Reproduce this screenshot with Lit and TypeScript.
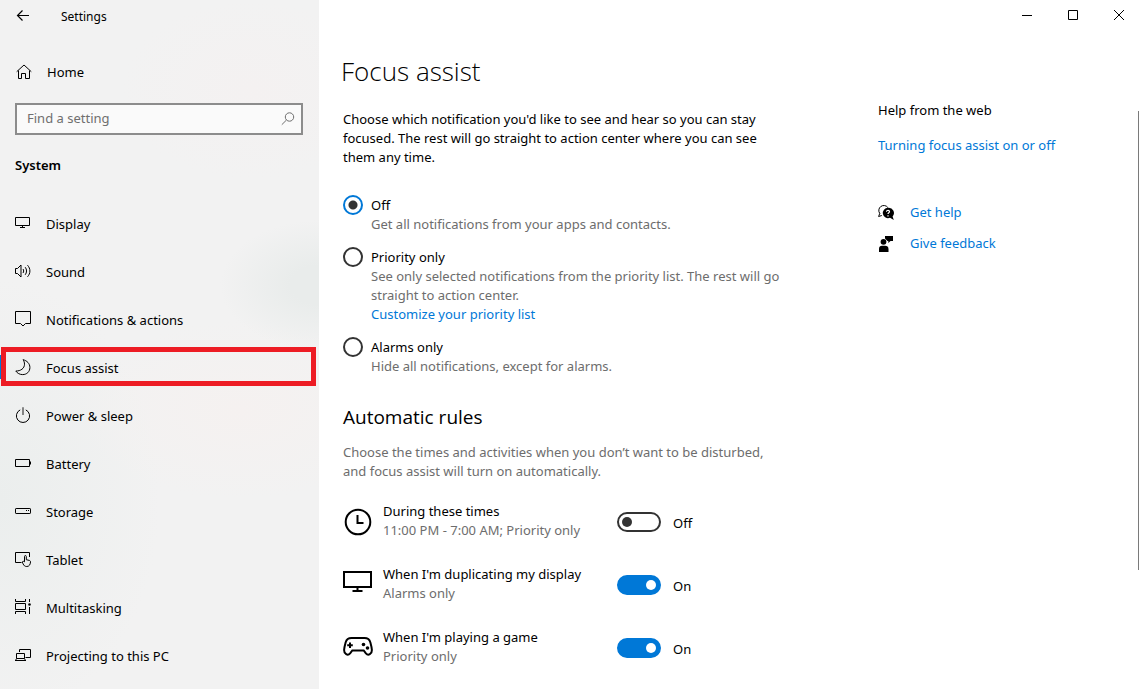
import { LitElement, html, svg, css } from "lit";
import { customElement, state } from "lit/decorators.js";

const icons: Record<string, unknown> = {
  display: svg`<path d="M.5 2.500h14v8H.5zM7.500 11v1.500M5 12.500h5"/>`,
  sound: svg`<path d="M.5 5.500h2L6 2v12l-3.500-3.500H.5z"/><path d="M8 6c.9 1.200.9 2.800 0 4M10.200 4.200c1.800 2.200 1.800 5.400 0 7.600M12.500 2.200c3.200 3.400 3.200 8.200 0 11.600"/>`,
  notifications: svg`<path d="M.5.5h15v12h-5L8 15l-2.500-2.500h-5z"/>`,
  focus: svg`<path d="M8 .7C12 1.600 14.900 4.600 14.900 8.500c0 4.200-3.200 7.100-7.200 7.100-2.900 0-5.400-1.300-6.900-3.600C5.600 12.100 9.500 9.500 9.500 5.200 9.500 3.500 9 2 8 .7z"/>`,
  power: svg`<path d="M5.200 2.900a6.600 6.600 0 1 0 5.600 0"/><path d="M8 .300v7.700" stroke-width="1.400" stroke="#555"/>`,
  battery: svg`<path d="M.5 4.500h14v7H.5zM15.500 6.500v3"/>`,
  storage: svg`<rect x=".5" y="5.500" width="15" height="5" rx=".6"/><path d="M11 7.500h1M13 7.500h1"/>`,
  tablet: svg`<path d="M6.500 11.500h-6v-10h14v4.500"/><path d="M9.500 10.800V5.500c0-1.300 1.800-1.300 1.800 0v3.200l3 .7c.9.200 1.300.8 1.200 1.600-.2 2.600-1.300 4.500-3.700 4.500-2 0-2.900-.9-3.700-2.600l-.9-1.900c.5-.9 1.500-.8 2.300-.2z"/>`,
  multitasking: svg`<path d="M.5 0v2.500h10V0M.5 4.500h10v6H.5zM.5 15v-2.500h10V15M14.500 0v3M14.500 8v7"/><circle cx="14.500" cy="5.500" r="1.300" fill="currentColor" stroke="none"/>`,
  projecting: svg`<path d="M4.500 5V2.500h11v8h-5"/><path d="M1.500 6.500h8v5h-8zM0 13.500h11M1.500 11.500l-1 2M9.500 11.500l1 2"/>`,
};

const navItems = [
  ["display", "Display"],
  ["sound", "Sound"],
  ["notifications", "Notifications & actions"],
  ["focus", "Focus assist"],
  ["power", "Power & sleep"],
  ["battery", "Battery"],
  ["storage", "Storage"],
  ["tablet", "Tablet"],
  ["multitasking", "Multitasking"],
  ["projecting", "Projecting to this PC"],
];

const ruleIcons: Record<string, unknown> = {
  clock: svg`<circle cx="15" cy="16" r="12.300"/><path d="M14.500 9v8h6"/>`,
  monitor: svg`<path d="M1 3h27v15H1zM14.500 18v4M9.500 22h10"/>`,
  gamepad: svg`<path d="M8.500 6h13c3.500 0 5 1.300 5.800 4.200.7 2.600 1.500 5.300 1.600 7.800.1 3.900-3.600 6.200-6 3.400L20.700 18.500H9.300L7.100 21.400C4.700 24.200 1 21.900 1.100 18c.1-2.500.9-5.200 1.600-7.800C3.500 7.300 5 6 8.500 6z"/><path d="M7 10.500v5.500M4.200 13.200h5.600"/><g fill="currentColor" stroke="none"><circle cx="20.500" cy="12.500" r="1.800"/><circle cx="24.500" cy="16" r="1.800"/></g>`,
};

@customElement("app-root")
export class AppRoot extends LitElement {
  @state() private mode = "off";
  @state() private rules = [
    { id: "times", icon: "clock", title: "During these times", detail: "11:00 PM - 7:00 AM; Priority only", on: false },
    { id: "duplicating", icon: "monitor", title: "When I'm duplicating my display", detail: "Alarms only", on: true },
    { id: "game", icon: "gamepad", title: "When I'm playing a game", detail: "Priority only", on: true },
  ];

  static styles = css`
    :host {
      display: flex;
      min-height: 100vh;
      background: #fff;
      color: #000;
      font: 13px/19px "Noto Sans", "Open Sans", sans-serif;
    }
    * { box-sizing: border-box; }
    h1, h2, p { margin: 0; font-weight: 400; }
    a { color: #0078d7; text-decoration: none; }
    button { padding: 0; border: 0; background: none; color: inherit; font: inherit; }
    svg { display: block; flex: none; fill: none; stroke: currentColor; stroke-width: 1; overflow: visible; }

    .sidebar {
      flex: 0 0 319px;
      background:
        radial-gradient(ellipse 100px 65px at 320px 285px, #e9eceb 30%, #e9eceb00),
        radial-gradient(ellipse 160px 90px at 240px 410px, #f5f1f0, #f5f1f000),
        radial-gradient(ellipse 130px 90px at 250px 90px, #f4f1f1, #f4f1f100),
        radial-gradient(ellipse 160px 220px at 0 500px, #ebeeed, #ebeeed00),
        #f2f2f2;
    }
    .caption { display: flex; align-items: center; height: 32px; padding-left: 15px; font-size: 12px; }
    .back { display: grid; place-items: center; width: 16px; height: 30px; margin-right: 30px; }
    .home { display: flex; align-items: center; gap: 15px; margin: 16px 0 7px; padding-left: 16px; height: 48px; color: inherit; }
    .search { position: relative; margin: 0 16px 0 15px; color: #6f6f6f; }
    .search input {
      display: block; width: 100%; height: 32px; padding: 0 34px 2px 10px;
      border: 2px solid #8c8c8c; border-radius: 0; background: #fafafa; font: inherit; color: #000; outline: 0;
    }
    .search input::placeholder { color: #6f6f6f; opacity: 1; }
    .search svg { position: absolute; right: 8px; top: 9px; }
    .section { padding: 20px 15px 25px; font-size: 13px; font-weight: 600; line-height: 20px; }
    .nav-item { position: relative; display: flex; align-items: center; gap: 13px; height: 48px; padding-left: 15px; color: inherit; }
    .current::before { content: ""; position: absolute; left: 0; top: 11px; width: 4px; height: 24px; background: #0078d7; }
    .current::after { content: ""; position: absolute; inset: 3px 3px 6px 1px; border: 5px solid #ed1c24; }

    .page { flex: 1; min-width: 0; }
    .controls { display: flex; justify-content: flex-end; gap: 6px; height: 30px; }
    .controls button { display: grid; place-items: center; width: 40px; }
    .columns { display: grid; grid-template-columns: minmax(0, 451px) minmax(180px, 1fr); column-gap: 84px; padding: 23px 16px 20px 24px; }
    h1, .heading { font-family: "Open Sans", "Noto Sans", sans-serif; }
    h1 { margin: 0 0 21px -2px; font-size: 26px; font-weight: 300; line-height: 36px; }
    .intro, .summary { max-width: 436px; }
    .options { display: grid; gap: 14px; margin: 29px 0 0; padding: 0; border: 0; }
    .option { display: grid; grid-template-columns: 20px minmax(0, 1fr); column-gap: 8px; }
    .option input {
      appearance: none; width: 20px; height: 20px; margin: -1px 0 0; border: 2px solid #333; border-radius: 50%; align-self: start;
    }
    .option input:checked { border-color: #0078d7; background: radial-gradient(circle, #333 4px, #3330 5px); }
    .option label, .option a { display: block; }
    .muted { color: #6d6d6d; }
    .heading { margin: 28px 0 13px; font-size: 19px; line-height: 26px; }
    .rules { display: grid; gap: 25px; margin-top: 21px; }
    .rule { display: grid; grid-template-columns: 30px minmax(0, 224px) 44px auto; align-items: center; column-gap: 10px; }
    .rule svg { stroke-width: 2; }
    .rule label { display: block; }
    .toggle {
      appearance: none; display: flex; align-items: center; width: 44px; height: 20px; margin: 2px 0 0; padding: 0 3px;
      border: 2px solid #333; border-radius: 10px;
    }
    .toggle::before { content: ""; width: 10px; height: 10px; border-radius: 50%; background: #333; }
    .toggle:checked { justify-content: flex-end; border-color: #0078d7; background: #0078d7; }
    .toggle:checked::before { background: #fff; }
    .rule output { padding: 4px 0 0 2px; }

    .help { padding-top: 48px; }
    .help p { margin-bottom: 16px; }
    .help-link { display: flex; align-items: center; gap: 16px; margin-top: 12px; }
    .help-link svg { color: #000; }
    .first { margin-top: 48px; }
    .scroll { position: absolute; right: 0; top: 111px; width: 1px; height: 459px; background: #7a7a7a; }
  `;

  private toggle(id: string) {
    this.rules = this.rules.map((r) => (r.id === id ? { ...r, on: !r.on } : r));
  }

  private option(id: string, title: string, detail: string, link?: string) {
    return html`<div class="option">
      <input type="radio" name="mode" id=${id} .checked=${this.mode === id} @change=${() => (this.mode = id)} />
      <div>
        <label for=${id}>${title}</label>
        <p class="muted">${detail}</p>
        ${link ? html`<a href="#priority">${link}</a>` : ""}
      </div>
    </div>`;
  }

  render() {
    return html`
      <aside class="sidebar">
        <div class="caption">
          <button class="back" aria-label="Back">
            <svg width="14" height="12" viewBox="0 0 14 12"><path d="M1.500 5.500H13M6.500.5l-5 5 5 5" stroke-width="1.200"/></svg>
          </button>
          <span>Settings</span>
        </div>
        <a class="home" href="#home">
          <svg width="16" height="16" viewBox="0 0 16 16"><path d="M.7 7.700 8 1l7.300 6.700M2.500 6.500v8h3v-5h4v5h4v-8"/></svg>
          Home
        </a>
        <div class="search">
          <input type="text" placeholder="Find a setting" aria-label="Find a setting" />
          <svg width="14" height="14" viewBox="0 0 14 14"><circle cx="8.500" cy="5" r="4.200"/><path d="M5.500 8 .8 12.700"/></svg>
        </div>
        <h2 class="section">System</h2>
        <nav>
          ${navItems.map(
            ([id, label]) => html`<a class="nav-item ${id === "focus" ? "current" : ""}" href="#${id}">
              <svg width="18" height="18" viewBox="0 0 18 18">${icons[id]}</svg>${label}
            </a>`
          )}
        </nav>
      </aside>
      <main class="page">
        <div class="controls">
          <button aria-label="Minimize"><svg width="10" height="10" viewBox="0 0 10 10"><path d="M0 5.500h10"/></svg></button>
          <button aria-label="Maximize"><svg width="10" height="10" viewBox="0 0 10 10"><path d="M.5.5h9v9h-9z"/></svg></button>
          <button aria-label="Close"><svg width="10" height="10" viewBox="0 0 10 10"><path d="M0 0l10 10M10 0L0 10"/></svg></button>
        </div>
        <div class="columns">
          <div>
            <h1>Focus assist</h1>
            <p class="intro">Choose which notification you'd like to see and hear so you can stay focused. The rest will go straight to action center where you can see them any time.</p>
            <fieldset class="options" aria-label="Focus assist mode">
              ${this.option("off", "Off", "Get all notifications from your apps and contacts.")}
              ${this.option("priority", "Priority only", "See only selected notifications from the priority list. The rest will go straight to action center.", "Customize your priority list")}
              ${this.option("alarms", "Alarms only", "Hide all notifications, except for alarms.")}
            </fieldset>
            <h2 class="heading">Automatic rules</h2>
            <p class="muted summary">Choose the times and activities when you don’t want to be disturbed, and focus assist will turn on automatically.</p>
            <div class="rules">
              ${this.rules.map(
                (r) => html`<div class="rule">
                  <svg width="30" height="30" viewBox="0 0 30 30">${ruleIcons[r.icon]}</svg>
                  <div>
                    <label for=${r.id}>${r.title}</label>
                    <p class="muted">${r.detail}</p>
                  </div>
                  <input class="toggle" type="checkbox" role="switch" id=${r.id} .checked=${r.on} @change=${() => this.toggle(r.id)} />
                  <output for=${r.id}>${r.on ? "On" : "Off"}</output>
                </div>`
              )}
            </div>
          </div>
          <div class="help">
            <p>Help from the web</p>
            <a href="#article">Turning focus assist on or off</a>
            <a class="help-link first" href="#help">
              <svg width="16" height="16" viewBox="0 0 16 16"><path d="M1.800 8.500A5 5 0 1 1 9.800 2.500M1.800 8.300.6 11.500l3.200-1"/><path d="M10 2.800a5.200 5.200 0 1 0 2 10l3.800 2.200-1.200-3.600A5.200 5.200 0 0 0 10 2.800z" fill="currentColor" stroke="none"/><path d="M8.500 6.700c0-2 3.200-1.800 3 .1-.1 1-1.500 1-1.500 2.200M10 10.200v1.200" stroke="#fff" stroke-width="1.200"/></svg>
              Get help
            </a>
            <a class="help-link" href="#feedback">
              <svg width="16" height="16" viewBox="0 0 16 16"><g fill="currentColor" stroke="none"><path d="M7 0h8v5h-2.500l-2.200 2V5H9.500L7 2.500z"/><circle cx="5.500" cy="5.800" r="2.900"/><path d="M1 16v-3C1 11 2.200 9.800 4 9.800h3.200c1.900 0 3.300 1.200 3.300 3.200v3z"/></g></svg>
              Give feedback
            </a>
          </div>
        </div>
        <div class="scroll"></div>
      </main>
    `;
  }
}
